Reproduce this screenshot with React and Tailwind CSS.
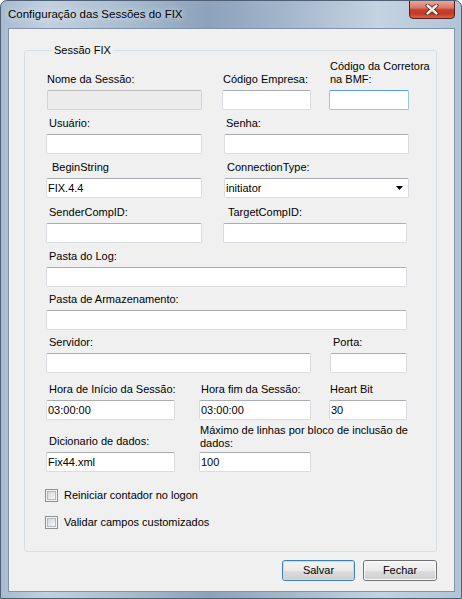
import React from "react";

function Box({ variant, value, select }) {
  let cls = "bg-white border-[#d9dce1] border-t-[#abadb3]";
  if (variant === "disabled") cls = "bg-[#ececec] border-[#d4d4d4] border-t-[#b9b9b9]";
  if (variant === "focus") cls = "bg-white border-[#98c4ec] border-t-[#569de5]";
  return (
    <div className={`h-[20px] w-full border rounded-[2px] flex items-center pl-[1px] pr-[5px] ${cls}`}>
      <span className="flex-1 whitespace-nowrap overflow-hidden leading-[13px]">{value}</span>
      {select && (
        <svg width="7" height="4" viewBox="0 0 7 4" className="shrink-0">
          <path d="M0 0h7L3.5 4z" fill="#000" />
        </svg>
      )}
    </div>
  );
}

function Field({ label, w, lx = "pl-[3px]", mb = "mb-[4px]", className = "", ...rest }) {
  const lines = Array.isArray(label) ? label : [label];
  return (
    <div className={`flex flex-col shrink-0 ${w} ${className}`}>
      <div className={`leading-[13px] whitespace-nowrap ${lx} ${mb}`}>
        {lines.map((l, i) => (
          <div key={i}>{l}</div>
        ))}
      </div>
      <Box {...rest} />
    </div>
  );
}

function Check({ label, className = "" }) {
  return (
    <div className={`flex items-center h-[13px] ${className}`}>
      <div className="w-[13px] h-[13px] border border-[#8e8f8f] bg-[#f4f4f4] p-[1px] shrink-0">
        <div className="w-full h-full border border-[#b5b9bf] bg-gradient-to-br from-[#d3d6db] to-[#f8f8f8]"></div>
      </div>
      <span className="ml-[6px] leading-[13px] whitespace-nowrap">{label}</span>
    </div>
  );
}

function Btn({ children, def, w }) {
  return (
    <div
      className={`${w} h-[21px] rounded-[3px] border ${
        def ? "border-[#3c7fb1]" : "border-[#707070]"
      }`}
    >
      <div
        className={`h-full w-full rounded-[2px] border ${
          def ? "border-[#b5e2f8]" : "border-[#fafafa]"
        } flex items-center justify-center bg-[linear-gradient(to_bottom,#f3f3f3_0%,#ebebeb_50%,#dddddd_51%,#d0d0d0_100%)] leading-[13px]`}
      >
        {children}
      </div>
    </div>
  );
}

export default function App() {
  return (
    <div className="w-[462px] h-[599px] rounded-t-[7px] border border-[#4f6075] bg-[linear-gradient(to_right,#a7bbd0_0%,#c2d1e1_10%,#a8bbcf_28%,#8ca2bb_45%,#a3b7cc_62%,#c4d3e2_82%,#b1c4d8_100%)] flex flex-col overflow-hidden font-['Liberation_Sans',Arial,sans-serif] text-[11px] text-black">
      {/* Title bar */}
      <div className="h-[27px] flex items-start justify-between shrink-0">
        <div className="ml-[7px] mt-[5px] leading-[16px] text-[11.5px] [text-shadow:0_0_6px_rgba(255,255,255,0.95)]">
          Configuração das Sessões do FIX
        </div>
        <div className="mr-[6px] -mt-[1px] w-[46px] h-[19px] rounded-b-[4px] border border-[#5b1d14] bg-[linear-gradient(to_bottom,#e9a89a_0%,#d9776a_40%,#c4402c_52%,#c13a26_75%,#d8644c_100%)] flex items-center justify-center">
          <svg width="14" height="11" viewBox="0 0 14 11">
            <path d="M2.5 1.5L11.5 9.5M11.5 1.5L2.5 9.5" stroke="#4a1c16" strokeWidth="4" strokeLinecap="round" />
            <path d="M2.5 1.5L11.5 9.5M11.5 1.5L2.5 9.5" stroke="#f4f0ef" strokeWidth="2.4" strokeLinecap="round" />
          </svg>
        </div>
      </div>

      {/* Client area */}
      <div className="ml-[7px] w-[447px] h-[564px] border border-[#8193a8] bg-[#f0f0f0] flex flex-col shrink-0">
        <fieldset className="ml-[15px] mt-[15px] w-[413px] border border-[#d5dfe5] rounded-[3px] pl-[21px] pt-[4px] pb-[22px]">
          <legend className="ml-[6px] px-[2px] leading-[12px]">Sessão FIX</legend>

          {/* Row 1 */}
          <div className="flex items-end">
            <Field label="Nome da Sessão:" w="w-[155px]" lx="pl-0" className="ml-[1px]" variant="disabled" />
            <Field label="Código Empresa:" w="w-[89px]" lx="pl-[1px]" className="ml-[20px]" />
            <Field label={["Código da Corretora", "na BMF:"]} w="w-[80px]" lx="pl-[1px]" className="ml-[18px]" variant="focus" />
          </div>

          {/* Row 2 */}
          <div className="flex items-end mt-[7px]">
            <Field label="Usuário:" w="w-[156px]" />
            <Field label="Senha:" w="w-[185px]" lx="pl-[2px]" className="ml-[22px]" />
          </div>

          {/* Row 3 */}
          <div className="flex items-end mt-[7px]">
            <Field label="BeginString" w="w-[156px]" lx="pl-[6px]" value="FIX.4.4" />
            <Field label="ConnectionType:" w="w-[185px]" lx="pl-[3px]" className="ml-[22px]" value="initiator" select />
          </div>

          {/* Row 4 */}
          <div className="flex items-end mt-[8px]">
            <Field label="SenderCompID:" w="w-[156px]" />
            <Field label="TargetCompID:" w="w-[184px]" lx="pl-[5px]" className="ml-[21px]" />
          </div>

          {/* Row 5 */}
          <div className="flex items-end mt-[7px]">
            <Field label="Pasta do Log:" w="w-[361px]" />
          </div>

          {/* Row 6 */}
          <div className="flex items-end mt-[6px]">
            <Field label="Pasta de Armazenamento:" w="w-[361px]" />
          </div>

          {/* Row 7 */}
          <div className="flex items-end mt-[6px]">
            <Field label="Servidor:" w="w-[265px]" />
            <Field label="Porta:" w="w-[77px]" className="ml-[19px]" />
          </div>

          {/* Row 8 */}
          <div className="flex items-end mt-[10px]">
            <Field label="Hora de Início da Sessão:" w="w-[129px]" value="03:00:00" />
            <Field label="Hora fim da Sessão:" w="w-[112px]" lx="pl-[2px]" className="ml-[24px]" value="03:00:00" />
            <Field label="Heart Bit" w="w-[78px]" lx="pl-[1px]" className="ml-[18px]" value="30" />
          </div>

          {/* Row 9 */}
          <div className="flex items-end mt-[4px]">
            <Field label="Dicionario de dados:" w="w-[129px]" value="Fix44.xml" />
            <Field
              label={["Máximo de linhas por bloco de inclusão de", "dados:"]}
              w="w-[112px]"
              lx="pl-[1px]"
              mb="mb-[2px]"
              className="ml-[24px]"
              value="100"
            />
          </div>

          <Check label="Reiniciar contador no logon" className="mt-[17px] -ml-[1px]" />
          <Check label="Validar campos customizados" className="mt-[14px] -ml-[1px]" />
        </fieldset>

        <div className="flex justify-end gap-[8px] mt-[8px] pr-[17px]">
          <Btn def w="w-[73px]">Salvar</Btn>
          <Btn w="w-[74px]">Fechar</Btn>
        </div>
      </div>
    </div>
  );
}
